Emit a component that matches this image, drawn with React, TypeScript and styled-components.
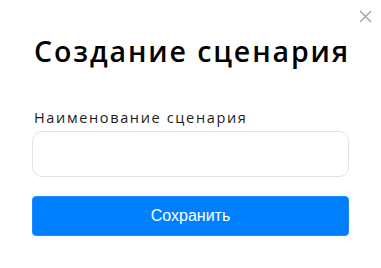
import React from "react";
import styled, { createGlobalStyle } from "styled-components";

const Global = createGlobalStyle`
  html, body { margin: 0; padding: 0; background: #ffffff; }
  * { box-sizing: border-box; }
`;

const Modal = styled.div`
  position: relative;
  width: 381px;
  height: 268px;
  background: #ffffff;
  padding: 34px 32px 0 32px;
  display: flex;
  flex-direction: column;
`;

const Close = styled.button`
  position: absolute;
  top: 9px;
  right: 9px;
  width: 14px;
  height: 14px;
  padding: 0;
  border: none;
  background: transparent;
  display: flex;
  align-items: center;
  justify-content: center;
  cursor: pointer;
`;

const Title = styled.h1`
  margin: 0 0 0 2px;
  font-family: "Open Sans", "Noto Sans", sans-serif;
  font-weight: 600;
  font-size: 28.5px;
  line-height: 34px;
  color: #000000;
  letter-spacing: 1.9px;
  white-space: nowrap;
`;

const Field = styled.label`
  display: flex;
  flex-direction: column;
  margin-top: 41px;
`;

const LabelText = styled.span`
  font-family: "Open Sans", "Noto Sans", sans-serif;
  font-weight: 400;
  font-size: 14.5px;
  line-height: 18px;
  color: #1c1c1c;
  margin-left: 2px;
  letter-spacing: 1.65px;
  white-space: nowrap;
`;

const Input = styled.input`
  margin-top: 4px;
  width: 317px;
  height: 46px;
  border: 1px solid #e2e2e2;
  border-radius: 10px;
  background: #ffffff;
  outline: none;
  padding: 0 12px;
  font-size: 14px;
`;

const Button = styled.button`
  margin-top: 19px;
  width: 317px;
  height: 40px;
  border: 1px solid #1a8cff;
  border-radius: 4px;
  background: #0080ff;
  color: #ffffff;
  font-family: "Liberation Sans", Arial, sans-serif;
  font-size: 16px;
  cursor: pointer;
`;

export default function App() {
  return (
    <>
      <Global />
      <Modal>
        <Close aria-label="Закрыть">
          <svg width="13" height="13" viewBox="0 0 13 13">
            <path d="M1 1 L12 12 M12 1 L1 12" stroke="#a8a8a8" strokeWidth="1.5" />
          </svg>
        </Close>
        <Title>Создание сценария</Title>
        <Field>
          <LabelText>Наименование сценария</LabelText>
          <Input type="text" />
        </Field>
        <Button>Сохранить</Button>
      </Modal>
    </>
  );
}
